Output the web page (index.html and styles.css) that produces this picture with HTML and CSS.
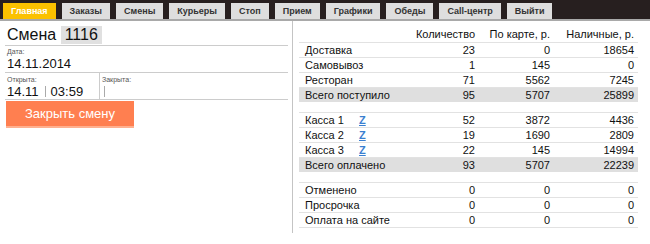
FILE: index.html
```html
<!DOCTYPE html>
<html lang="ru">
<head>
    <meta charset="UTF-8">
    <title>Смена</title>
    <link rel="stylesheet" href="styles.css">
</head>
<body>

<div class="topbar">
    <ul class="tabs">
        <li class="active"><a href="#">Главная</a></li>
        <li><a href="#">Заказы</a></li>
        <li><a href="#">Смены</a></li>
        <li><a href="#">Курьеры</a></li>
        <li><a href="#">Стоп</a></li>
        <li><a href="#">Прием</a></li>
        <li><a href="#">Графики</a></li>
        <li><a href="#">Обеды</a></li>
        <li><a href="#">Call-центр</a></li>
        <li><a href="#">Выйти</a></li>
    </ul>
</div>

<div class="main">
    <!-- Текущая смена -->
    <div class="shift">
        <div class="shift-head">Смена <span class="shift-num">1116</span></div>

        <div class="field">
            <div class="field-label">Дата:</div>
            <div class="field-value">14.11.2014</div>
        </div>

        <div class="field-row">
            <div class="field">
                <div class="field-label">Открыта:</div>
                <div class="field-value">14.11<span class="sep"></span>03:59</div>
            </div>
            <div class="field">
                <div class="field-label">Закрыта:</div>
                <div class="field-value"><span class="sep sep-empty"></span></div>
            </div>
        </div>

        <button class="btn-close" type="button">Закрыть смену</button>
    </div>

    <!-- Отчет по смене -->
    <div class="report">
        <table class="report-table">
            <colgroup>
                <col class="c-label">
                <col class="c-count">
                <col class="c-card">
                <col class="c-cash">
            </colgroup>
            <thead>
                <tr>
                    <th></th>
                    <th>Количество</th>
                    <th>По карте, р.</th>
                    <th>Наличные, р.</th>
                </tr>
            </thead>
            <tbody>
                <tr><td class="label">Доставка</td><td>23</td><td>0</td><td>18654</td></tr>
                <tr><td class="label">Самовывоз</td><td>1</td><td>145</td><td>0</td></tr>
                <tr><td class="label">Ресторан</td><td>71</td><td>5562</td><td>7245</td></tr>
                <tr class="total"><td class="label">Всего поступило</td><td>95</td><td>5707</td><td>25899</td></tr>

                <tr class="gap"><td colspan="4"></td></tr>

                <tr><td class="label"><span class="kassa">Касса 1</span><a class="z" href="#">Z</a></td><td>52</td><td>3872</td><td>4436</td></tr>
                <tr><td class="label"><span class="kassa">Касса 2</span><a class="z" href="#">Z</a></td><td>19</td><td>1690</td><td>2809</td></tr>
                <tr><td class="label"><span class="kassa">Касса 3</span><a class="z" href="#">Z</a></td><td>22</td><td>145</td><td>14994</td></tr>
                <tr class="total"><td class="label">Всего оплачено</td><td>93</td><td>5707</td><td>22239</td></tr>

                <tr class="gap"><td colspan="4"></td></tr>

                <tr><td class="label">Отменено</td><td>0</td><td>0</td><td>0</td></tr>
                <tr><td class="label">Просрочка</td><td>0</td><td>0</td><td>0</td></tr>
                <tr class="last"><td class="label">Оплата на сайте</td><td>0</td><td>0</td><td>0</td></tr>
            </tbody>
        </table>
    </div>
</div>

</body>
</html>
```

FILE: styles.css
```css
* {
    margin: 0;
    padding: 0;
    box-sizing: border-box;
}

body {
    font-family: "Liberation Sans", Arial, sans-serif;
    color: #111;
    background-color: #fff;
}

/* Верхнее меню */
.topbar {
    height: 21px;
    padding: 3px 0 0 3px;
    background-color: #271f1f;
    border-bottom: 2px solid #a9a9a9;
}

.tabs {
    display: flex;
    gap: 6px;
    list-style: none;
}

.tabs a {
    display: block;
    height: 16px;
    line-height: 16px;
    padding: 0 8px;
    background-color: #dedede;
    color: #333;
    font-size: 9px;
    font-weight: bold;
    text-decoration: none;
}

.tabs .active a {
    background-color: #fbc100;
    color: #fff;
}

.main {
    display: flex;
}

/* Левая колонка */
.shift {
    width: 293px;
    padding: 0 4px 0 5px;
    border-right: 1px solid #c4c4c4;
}

.shift-head {
    padding: 5px 2px 1px;
    font-size: 16px;
    line-height: 18px;
    border-bottom: 1px solid #ccc;
}

.shift-num {
    display: inline-block;
    padding: 0 4px;
    background-color: #e0e0e0;
}

.field {
    padding: 2px 2px 1px;
    border-bottom: 1px solid #ccc;
}

.field-label {
    font-size: 7px;
    line-height: 8px;
    color: #555;
}

.field-value {
    font-size: 13px;
    line-height: 15px;
}

.field-row {
    display: flex;
    border-bottom: 1px solid #ccc;
}

.field-row .field {
    padding: 3px 2px 0;
    border-bottom: 0;
}

.field-row .field:first-child {
    width: 95px;
    border-right: 1px solid #ccc;
}

.sep {
    display: inline-block;
    width: 1px;
    height: 11px;
    margin: 0 5px 0 6px;
    background-color: #aaa;
    vertical-align: -1px;
}

.sep-empty {
    margin-left: 2px;
}

.btn-close {
    display: block;
    width: 128px;
    height: 27px;
    margin: 1px 0 0 1px;
    background-color: #ff7f50;
    border: 0;
    border-bottom: 2px solid #ffb08f;
    color: #fff;
    font-family: "Liberation Sans", Arial, sans-serif;
    font-size: 13px;
    cursor: pointer;
}

/* Правая колонка */
.report {
    flex: 1;
    padding: 6px 12px 5px 6px;
}

.report-table {
    width: 100%;
    table-layout: fixed;
    border-collapse: separate;
    border-spacing: 0;
    font-size: 11px;
}

.c-label { width: 111px; }
.c-count { width: 69px; }
.c-card { width: 75px; }
.c-cash { width: 84px; }

.report-table th {
    height: 15px;
    padding: 0 4px 1px;
    font-weight: normal;
    text-align: right;
    line-height: 14px;
    vertical-align: bottom;
}

.report-table td {
    padding: 0 4px;
    line-height: 14px;
    text-align: right;
    white-space: nowrap;
    border-top: 1px solid #e2e2e2;
}

.report-table td.label {
    padding-left: 6px;
    text-align: left;
}

.report-table tr.total td {
    background-color: #dfdfdf;
}

.report-table tr.gap td {
    height: 10px;
    padding: 0;
    line-height: 0;
    border-top: 0;
}

.report-table tr.last td {
    border-bottom: 1px solid #e2e2e2;
}

.kassa {
    display: inline-block;
    width: 54px;
}

.z {
    color: #3a7fd0;
    font-weight: bold;
    text-decoration: underline;
}
```
